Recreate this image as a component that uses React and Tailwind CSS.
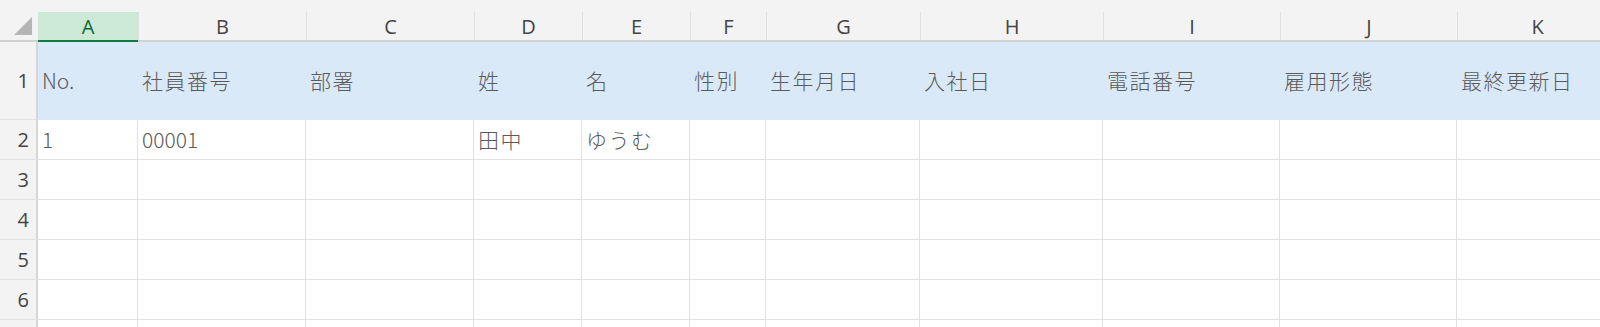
import React from 'react'

const cols = [
  { key: 'A', w: 'w-[100px]', head: 'No.', val: '1' },
  { key: 'B', w: 'w-[168px]', head: '社員番号', val: '00001' },
  { key: 'C', w: 'w-[168px]', head: '部署', val: '' },
  { key: 'D', w: 'w-[108px]', head: '姓', val: '田中' },
  { key: 'E', w: 'w-[108px]', head: '名', val: 'ゆうむ' },
  { key: 'F', w: 'w-[76px]', head: '性別', val: '' },
  { key: 'G', w: 'w-[154px]', head: '生年月日', val: '' },
  { key: 'H', w: 'w-[183px]', head: '入社日', val: '' },
  { key: 'I', w: 'w-[177px]', head: '電話番号', val: '' },
  { key: 'J', w: 'w-[177px]', head: '雇用形態', val: '' },
  { key: 'K', w: 'w-[160px]', head: '最終更新日', val: '' },
]

const cellFont = { fontFamily: '"Noto Sans CJK JP", "Noto Sans", sans-serif' }
const uiFont = { fontFamily: '"Open Sans", "Noto Sans", sans-serif' }

// digits and latin sit tighter than kana/kanji
const isLatin = s => /^[0-9A-Za-z.]+$/.test(s)

function RowHead({ n, h }) {
  return (
    <div className={`w-[38px] shrink-0 ${h} bg-[#f3f3f3] border-r-2 border-r-[#d6d6d6] border-b border-b-[#e1e1e1] flex items-center justify-end pr-[7px] text-[20px] text-[#444]`} style={uiFont}>
      {n}
    </div>
  )
}

export default function App() {
  return (
    <div className="w-[1600px] h-[327px] overflow-hidden bg-white">
      {/* top strip */}
      <div className="h-[12px] bg-[#f3f3f3]" />

      {/* column letters */}
      <div className="flex h-[30px] bg-[#f3f3f3] border-b-2 border-b-[#d0d0d0]">
        <div className="w-[38px] shrink-0 flex items-start justify-start pl-[14px] pt-[5px]">
          <svg width="18" height="18" viewBox="0 0 18 18">
            <polygon points="18,0 18,18 0,18" fill="#b5b5b5" />
          </svg>
        </div>
        {cols.map(c => c.key === 'A' ? (
          <div key={c.key} className={`${c.w} shrink-0 -mb-[2px] bg-[#cbe9d6] border-b-2 border-b-[#107c41] flex items-center justify-center pt-[2px] text-[20px] text-[#0f6b38]`} style={uiFont}>
            {c.key}
          </div>
        ) : (
          <div key={c.key} className={`${c.w} shrink-0 border-l border-l-[#e0e0e0] flex items-center justify-center pt-[2px] text-[20px] text-[#444]`} style={uiFont}>
            {c.key}
          </div>
        ))}
      </div>

      {/* row 1 */}
      <div className="flex">
        <RowHead n="1" h="h-[78px]" />
        {cols.map(c => (
          <div key={c.key} className={`${c.w} shrink-0 h-[78px] bg-[#dae9f8] flex items-center pl-[4px] text-[21px] ${isLatin(c.head) ? 'tracking-normal' : 'tracking-[1.5px]'} text-[#5a5a5a] font-light whitespace-nowrap`} style={cellFont}>
            {c.head}
          </div>
        ))}
      </div>

      {/* row 2 */}
      <div className="flex">
        <RowHead n="2" h="h-[40px]" />
        {cols.map(c => (
          <div key={c.key} className={`${c.w} shrink-0 h-[40px] border-r border-b border-[#e1e1e1] flex items-center pl-[4px] text-[21px] ${isLatin(c.val) ? 'tracking-normal' : 'tracking-[1.5px]'} text-[#5a5a5a] font-light whitespace-nowrap`} style={cellFont}>
            {c.val}
          </div>
        ))}
      </div>

      {[3, 4, 5, 6, ''].map((n, i) => (
        <div key={i} className="flex">
          <RowHead n={n} h="h-[40px]" />
          {cols.map(c => (
            <div key={c.key} className={`${c.w} shrink-0 h-[40px] border-r border-b border-[#e1e1e1]`} />
          ))}
        </div>
      ))}
    </div>
  )
}
